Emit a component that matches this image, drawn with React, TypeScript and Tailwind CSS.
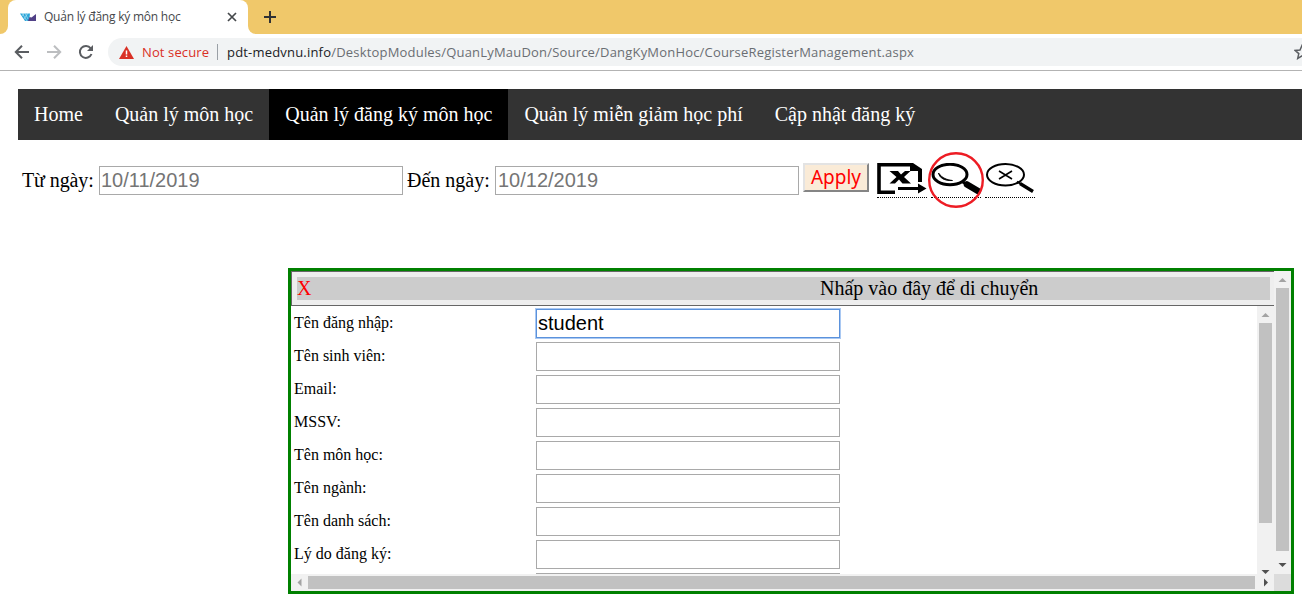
import React from "react";

const serif = "font-['Liberation_Serif',serif]";
const sans = "font-['Liberation_Sans',sans-serif]";
const ui = "font-['Open_Sans','Noto_Sans',sans-serif]";

const navItems = [
  { label: "Home", active: false },
  { label: "Quản lý môn học", active: false },
  { label: "Quản lý đăng ký môn học", active: true },
  { label: "Quản lý miễn giảm học phí", active: false },
  { label: "Cập nhật đăng ký", active: false },
];

const fields = [
  "Tên đăng nhập:",
  "Tên sinh viên:",
  "Email:",
  "MSSV:",
  "Tên môn học:",
  "Tên ngành:",
  "Tên danh sách:",
  "Lý do đăng ký:",
  "",
];

function TabStrip() {
  return (
    <div className="flex h-[34px] shrink-0 bg-[#f0c86a]">
      <div className="w-2 overflow-hidden bg-white">
        <div className="h-full rounded-br-lg bg-[#f0c86a]" />
      </div>
      <div className="flex w-60 items-center rounded-t-lg bg-white pl-3">
        <svg width="17" height="11" viewBox="0 0 17 11">
          <path d="M0 1.500h10L9 9H5z" fill="#2ba5d8" />
          <path d="M2 1l5 8M5 1l3 6M8 1L4 7M4 1L2.500 4" stroke="#d9f2fa" strokeWidth=".5" />
          <path d="M8 9l1.500-4 2 .5L16 2v7z" fill="#514187" />
        </svg>
        <span className={`${ui} ml-[7px] w-[176px] whitespace-nowrap text-[12px] tracking-[-0.22px] text-[#45484b]`}>
          Quản lý đăng ký môn học
        </span>
        <svg className="ml-[7px]" width="10" height="10" viewBox="0 0 10 10">
          <path d="M1 1l8 8M9 1L1 9" stroke="#45484b" strokeWidth="1.700" />
        </svg>
      </div>
      <div className="w-2 overflow-hidden bg-white">
        <div className="h-full rounded-bl-lg bg-[#f0c86a]" />
      </div>
      <svg className="ml-2 mt-[11px]" width="12" height="12" viewBox="0 0 12 12">
        <path d="M6 0v12M0 6h12" stroke="#303134" strokeWidth="2" />
      </svg>
    </div>
  );
}

function AddressBar() {
  return (
    <div className="flex h-[37px] shrink-0 items-center overflow-hidden border-b border-[#b3b3b3] bg-white">
      <svg className="ml-[14px] shrink-0" width="16" height="14" viewBox="0 0 16 14">
        <path d="M15 7H2M8 .8L1.800 7 8 13.200" fill="none" stroke="#5a5d61" strokeWidth="2" />
      </svg>
      <svg className="ml-4 shrink-0" width="16" height="14" viewBox="0 0 16 14">
        <path d="M1 7h13M8 .8L14.200 7 8 13.200" fill="none" stroke="#bcbec0" strokeWidth="2" />
      </svg>
      <svg className="ml-4 shrink-0" width="16" height="16" viewBox="0 0 16 16">
        <path d="M13.500 10A6 6 0 1 1 12.700 4.300" fill="none" stroke="#5a5d61" strokeWidth="2" />
        <path d="M15 1v6H9z" fill="#5a5d61" />
      </svg>
      <div className="ml-[14px] flex h-7 min-w-0 flex-1 items-center rounded-l-full bg-[#f1f3f4] pl-[11px]">
        <svg className="shrink-0" width="15" height="13" viewBox="0 0 15 13">
          <path d="M7.500 0L15 13H0z" fill="#d93025" />
          <path d="M7.500 4.500v4M7.500 9.500v1.500" stroke="#fff" strokeWidth="1.500" />
        </svg>
        <span className={`${ui} ml-2 w-[75px] shrink-0 whitespace-nowrap pt-px text-[13px] tracking-[0.12px] text-[#d93025]`}>
          Not secure
        </span>
        <span className="h-4 w-px shrink-0 bg-[#9aa0a6]" />
        <span className={`${ui} ml-[9px] w-[1070px] shrink-0 whitespace-nowrap pt-px text-[13px] tracking-[0.192px] text-[#6a6e73]`}>
          <span className="text-[#202124]">pdt-medvnu.info</span>
          /DesktopModules/QuanLyMauDon/Source/DangKyMonHoc/CourseRegisterManagement.aspx
        </span>
        <svg className="-ml-[3px] shrink-0" width="16" height="16" viewBox="0 0 16 16">
          <path d="M8 1.500l2 4.500 4.900.4-3.700 3.200 1.100 4.800L8 11.900l-4.300 2.500 1.100-4.800L1.100 6.400 6 6z" fill="none" stroke="#5a5d61" strokeWidth="1.500" />
        </svg>
      </div>
    </div>
  );
}

function ExportIcon() {
  return (
    <svg width="50" height="31" viewBox="0 0 50 31">
      <path d="M18 29.200H2V1.800h32" fill="none" stroke="#000" strokeWidth="3.600" />
      <path d="M33 0h3l9 6v13h-4V8h-8z" />
      <path d="M12.500 8h8.500l3 3.500L28 8h5.500l-6.500 6 7 6.500h-8.500l-3.500-4-4 4h-5.500l7-6.500z" />
      <path d="M21 24h20v-3.500l8.500 5-8.500 5V27H21z" />
    </svg>
  );
}

function SearchIcon() {
  return (
    <svg width="50" height="31" viewBox="0 0 50 31">
      <ellipse cx="19" cy="11.500" rx="17" ry="10.200" fill="none" stroke="#000" strokeWidth="3" />
      <path d="M7.500 10c1 5 6 8 14 7.500-5.500-.8-10-2-14-7.500z" fill="#000" stroke="#000" strokeWidth=".9" />
      <path d="M31 18.500l5 3" stroke="#000" strokeWidth="3" />
      <path d="M36 21.500l11 6.500" stroke="#000" strokeWidth="6.500" strokeLinecap="round" />
    </svg>
  );
}

function ClearSearchIcon() {
  return (
    <svg width="50" height="31" viewBox="0 0 50 31">
      <ellipse cx="20.500" cy="11.700" rx="18.500" ry="10.700" fill="none" stroke="#000" strokeWidth="2" />
      <path d="M14 8l13 8M27 8l-13 8" stroke="#000" strokeWidth="1.600" />
      <path d="M32 18.500l4 2.500" stroke="#000" strokeWidth="2" />
      <path d="M35 20.500L48 28.500" stroke="#000" strokeWidth="3.400" />
    </svg>
  );
}

function IconLink({ children }: { children: React.ReactNode }) {
  return <div className="mr-1 h-[35px] w-[50px] border-b border-dotted border-black">{children}</div>;
}

function FilterBar() {
  return (
    <div className={`${serif} flex h-12 items-start pl-[22px] text-[20px] leading-[23px] text-black`}>
      <span className="mt-[17px] w-[77px] whitespace-nowrap tracking-[-0.1px]">Từ ngày:</span>
      <div className={`${sans} mt-[14px] h-[29px] w-[304px] border border-[#a9a9a9] pl-[1px] leading-[26px] text-[#757575]`}>10/11/2019</div>
      <span className="ml-1 mt-[17px] w-[88px] whitespace-nowrap">Đến ngày:</span>
      <div className={`${sans} mt-[14px] h-[29px] w-[304px] border border-[#a9a9a9] pl-[2px] leading-[26px] text-[#757575]`}>10/12/2019</div>
      <button className="ml-1 mt-[11px] h-[29px] w-[66px] border-2 border-b-[#858585] border-l-[#e3e3e3] border-r-[#858585] border-t-[#e3e3e3] bg-[#faebd7] pb-[2px] font-['Noto_Sans',sans-serif] text-[19px] leading-[22px] text-[#ff0000]">
        Apply
      </button>
      <div className="ml-2 mt-[11px] flex">
        <IconLink><ExportIcon /></IconLink>
        <div className="relative">
          <IconLink><SearchIcon /></IconLink>
          <svg className="absolute -left-[4px] -top-[12px]" width="58" height="58" viewBox="0 0 58 58">
            <circle cx="29" cy="29" r="26.800" fill="none" stroke="#ed1c24" strokeWidth="2.400" />
          </svg>
        </div>
        <IconLink><ClearSearchIcon /></IconLink>
      </div>
    </div>
  );
}

function Arrow({ direction, muted }: { direction: "up" | "down" | "left" | "right"; muted?: boolean }) {
  const shapes = {
    up: "M4.500 11h8L8.500 7z",
    down: "M4.500 6h8l-4 4z",
    left: "M10.500 4.500v8l-4-4z",
    right: "M7 4.500v8l4-4z",
  };
  return (
    <svg className="shrink-0" width="17" height="17" viewBox="0 0 17 17">
      <path d={shapes[direction]} fill={muted ? "#a3a3a3" : "#505050"} />
    </svg>
  );
}

function SearchDialog() {
  return (
    <div className="ml-[288px] mt-[68px] flex h-[326px] w-[1006px] flex-col border-[3px] border-[#008000] bg-white">
      <div className="flex h-[303px]">
        <div className="flex w-[983px] flex-col">
          <div className="h-[35px] shrink-0 border-b border-l border-t border-[#666] bg-[#eee] py-[5px] pl-[5px] pr-1">
            <div className={`${serif} flex h-[23px] items-center bg-[#ccc] text-[20px] leading-[23px]`}>
              <span className="w-[523px] text-[#ff0000]">X</span>
              <span className="whitespace-nowrap text-black">Nhấp vào đây để di chuyển</span>
            </div>
          </div>
          <div className="flex h-[268px]">
            <div className="h-[268px] w-[966px] overflow-hidden pl-[3px] pt-[3px]">
              {fields.map((label, index) => (
                <div key={index} className="flex h-[33px] items-start">
                  <span className={`${serif} mt-[5px] w-[241px] whitespace-nowrap text-[16px] leading-[18px] text-black`}>{label}</span>
                  <div
                    className={
                      index === 0
                        ? `${sans} ml-[1px] h-[29px] w-[304px] border border-[#5b92dc] pl-[1px] text-[20px] leading-[27px] text-black shadow-[0_0_0_1px_#a9c8f2]`
                        : "ml-[1px] h-[29px] w-[304px] border border-[#a9a9a9]"
                    }
                  >
                    {index === 0 ? "student" : ""}
                  </div>
                </div>
              ))}
            </div>
            <div className="flex w-[17px] flex-col bg-[#f1f1f1]">
              <Arrow direction="up" muted />
              <div className="mx-[2px] h-[200px] bg-[#c1c1c1]" />
              <div className="mt-[41px] h-[10px] overflow-visible"><Arrow direction="down" /></div>
            </div>
          </div>
        </div>
        <div className="flex w-[17px] flex-col bg-[#f1f1f1]">
          <Arrow direction="up" muted />
          <div className="mx-[2px] mb-[6px] h-[263px] bg-[#c1c1c1]" />
          <Arrow direction="down" />
        </div>
      </div>
      <div className="flex h-[17px]">
        <div className="flex w-[983px] bg-[#f1f1f1]">
          <Arrow direction="left" muted />
          <div className="my-[2px] mr-[2px] w-[947px] bg-[#c1c1c1]" />
          <Arrow direction="right" />
        </div>
        <div className="w-[17px] bg-[#dcdcdc]" />
      </div>
    </div>
  );
}

export default function App() {
  return (
    <div className="flex h-[599px] w-[1302px] flex-col overflow-hidden bg-white">
      <TabStrip />
      <AddressBar />
      <nav className={`${serif} ml-[18px] mt-[18px] flex h-[51px] shrink-0 bg-[#333] text-[20px] leading-[23px] text-white`}>
        {navItems.map((item) => (
          <a key={item.label} className={item.active ? "whitespace-nowrap bg-black px-4 pt-[14px]" : "whitespace-nowrap px-4 pt-[14px]"}>
            {item.label}
          </a>
        ))}
      </nav>
      <main className="pt-3">
        <FilterBar />
        <SearchDialog />
      </main>
    </div>
  );
}
